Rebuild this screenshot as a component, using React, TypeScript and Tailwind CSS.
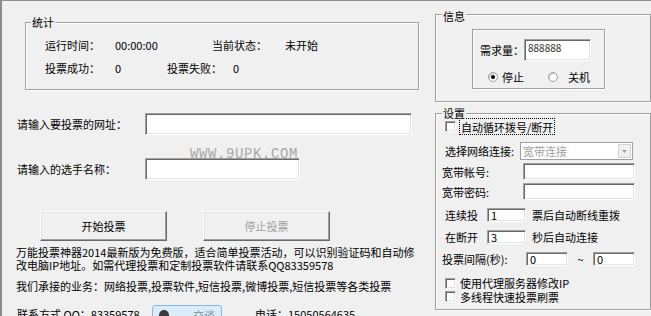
import React from "react";

const sunken =
  "bg-white border border-t-[#a0a0a0] border-l-[#a0a0a0] border-b-white border-r-white shadow-[inset_1px_1px_0_#696969,inset_-1px_-1px_0_#e3e3e3]";
const etched = "border border-[#a0a0a0] shadow-[inset_1px_1px_0_#ffffff,1px_1px_0_#ffffff]";
const raised =
  "border border-t-white border-l-white border-b-[#696969] border-r-[#696969] shadow-[inset_-1px_-1px_0_#a0a0a0,inset_1px_1px_0_#e3e3e3]";

function Check() {
  return <div className={`w-[11px] h-[11px] shrink-0 ${sunken}`} />;
}

function Radio({ on }: { on?: boolean }) {
  return (
    <div className="w-[10px] h-[10px] shrink-0 rounded-full border border-[#a0a0a0] bg-white flex items-center justify-center shadow-[inset_1px_1px_0_#c8c8c8]">
      {on ? <div className="w-[4px] h-[4px] rounded-full bg-black" /> : null}
    </div>
  );
}

export default function App() {
  return (
    <div className="w-[651px] h-[316px] overflow-hidden bg-[#f0f0f0] border-t border-t-[#8c8c8c] border-l-2 border-l-[#8c8c8c] flex text-[11px] leading-[14px] text-black font-['Noto_Sans_CJK_SC',sans-serif]">
      {/* LEFT */}
      <div className="w-[433px] shrink-0 flex flex-col relative">
        <div className={`relative ml-[23px] mt-[21px] w-[394px] h-[68px] shrink-0 ${etched} pt-[15px] pl-[19px]`}>
          <span className="absolute left-[5px] top-[-8px] px-[1px] bg-[#f0f0f0]">统计</span>
          <div className="flex h-[14px] whitespace-nowrap">
            <span className="w-[70px]">运行时间：</span>
            <span className="w-[97px]">00:00:00</span>
            <span className="w-[73px]">当前状态：</span>
            <span>未开始</span>
          </div>
          <div className="flex h-[14px] mt-[9px] whitespace-nowrap">
            <span className="w-[70px]">投票成功：</span>
            <span className="w-[52px]">0</span>
            <span className="w-[66px]">投票失败：</span>
            <span>0</span>
          </div>
        </div>

        <div className="flex items-center h-[22px] mt-[23px] pl-[15px] whitespace-nowrap">
          <span className="w-[128px]">请输入要投票的网址：</span>
          <div className={`w-[267px] h-[22px] ${sunken}`} />
        </div>
        <div className="flex items-center h-[22px] mt-[23px] pl-[15px] whitespace-nowrap">
          <span className="w-[128px]">请输入的选手名称：</span>
          <div className={`w-[155px] h-[22px] ${sunken}`} />
        </div>

        <div className="absolute left-[188px] top-[146px] text-[14px] leading-[14px] tracking-[0.6px] text-[#a8a8a8] font-['Liberation_Mono',monospace]">
          WWW.9UPK.COM
        </div>

        <div className="flex mt-[31px] pl-[38px] gap-[36px]">
          <div className={`w-[127px] h-[30px] bg-[#f0f0f0] ${raised} flex items-center justify-center`}>开始投票</div>
          <div className={`w-[127px] h-[30px] bg-[#f0f0f0] ${raised} flex items-center justify-center text-[#a0a0a0]`}>停止投票</div>
        </div>

        <div className="mt-[5px] pl-[14px] leading-[12.5px] whitespace-nowrap">
          万能投票神器2014最新版为免费版，适合简单投票活动，可以识别验证码和自动修
          <br />
          改电脑IP地址。如需代理投票和定制投票软件请联系QQ83359578
        </div>
        <div className="mt-[8px] pl-[14px] whitespace-nowrap">
          我们承接的业务：网络投票,投票软件,短信投票,微博投票,短信投票等各类投票
        </div>
        <div className="mt-[12px] pl-[15px] flex items-start whitespace-nowrap">
          <span className="w-[135px] pt-[2px]">联系方式 QQ：83359578</span>
          <div className="w-[70px] h-[20px] rounded-[3px] border border-[#84b7e3] bg-[#dcecfb] flex items-center pl-[6px] gap-[24px]">
            <div className="w-[10px] h-[10px] rounded-full bg-[#3a3a3a]" />
            <span className="text-[#7a8a9a]">交谈</span>
          </div>
          <span className="ml-[33px] pt-[2px]">电话：15050564635</span>
        </div>
      </div>

      {/* RIGHT */}
      <div className="w-[216px] shrink-0 flex flex-col">
        <div className={`relative mt-[13px] h-[88px] shrink-0 ${etched} pt-[14px] pl-[36px]`}>
          <span className="absolute left-[6px] top-[-6px] px-[1px] bg-[#f0f0f0]">信息</span>
          <div className={`w-[133px] h-[60px] ${etched} pt-[9px] pl-[7px]`}>
            <div className="flex items-center h-[22px] whitespace-nowrap">
              <span className="w-[44px]">需求量：</span>
              <div className={`w-[67px] h-[22px] ${sunken} text-[10px] leading-[10px] pt-[3px] pl-[3px] text-[#333]`}>888888</div>
            </div>
            <div className="flex items-center h-[14px] mt-[9px] whitespace-nowrap">
              <div className="ml-[8px]"><Radio on /></div>
              <span className="ml-[4px]">停止</span>
              <div className="ml-[24px]"><Radio /></div>
              <span className="ml-[10px]">关机</span>
            </div>
          </div>
        </div>

        <div className={`relative mt-[11px] h-[197px] shrink-0 ${etched} flex flex-col`}>
          <span className="absolute left-[6px] top-[-8px] px-[1px] bg-[#f0f0f0]">设置</span>

          <div className="flex items-center h-[17px] mt-[4px] pl-[9px] whitespace-nowrap">
            <Check />
            <span className="ml-[3px] h-[17px] border border-dotted border-black px-[1px] flex items-center">自动循环拨号/断开</span>
          </div>

          <div className="flex items-center h-[18px] mt-[7px] pl-[9px] whitespace-nowrap">
            <span className="w-[75px]">选择网络连接:</span>
            <div className="w-[113px] h-[18px] border border-[#a0a0a0] bg-white flex items-center justify-between pl-[2px] pr-[1px]">
              <span className="text-[#a0a0a0]">宽带连接</span>
              <div className="w-[13px] h-[14px] bg-[#f0f0f0] border border-[#d4d4d4] flex items-center justify-center">
                <svg width="5" height="3" viewBox="0 0 5 3"><path d="M0 0h5L2.5 3z" fill="#a0a0a0" /></svg>
              </div>
            </div>
          </div>

          <div className="flex items-center h-[17px] mt-[3px] pl-[6px] whitespace-nowrap">
            <span className="w-[81px]">宽带帐号:</span>
            <div className={`w-[112px] h-[17px] ${sunken}`} />
          </div>
          <div className="flex items-center h-[17px] mt-[3px] pl-[6px] whitespace-nowrap">
            <span className="w-[81px]">宽带密码:</span>
            <div className={`w-[112px] h-[17px] ${sunken}`} />
          </div>

          <div className="flex items-center h-[14px] mt-[8px] pl-[9px] whitespace-nowrap">
            <span className="w-[42px]">连续投</span>
            <div className={`w-[39px] h-[14px] ${sunken} leading-[12px] pl-[3px]`}>1</div>
            <span className="ml-[6px]">票后自动断线重拨</span>
          </div>
          <div className="flex items-center h-[14px] mt-[8px] pl-[9px] whitespace-nowrap">
            <span className="w-[42px]">在断开</span>
            <div className={`w-[39px] h-[14px] ${sunken} leading-[12px] pl-[3px]`}>3</div>
            <span className="ml-[6px]">秒后自动连接</span>
          </div>
          <div className="flex items-center h-[14px] mt-[8px] pl-[6px] whitespace-nowrap">
            <span className="w-[84px]">投票间隔(秒):</span>
            <div className={`w-[42px] h-[14px] ${sunken} leading-[12px] pl-[3px]`}>0</div>
            <span className="w-[25px] text-center">~</span>
            <div className={`w-[42px] h-[14px] ${sunken} leading-[12px] pl-[3px]`}>0</div>
          </div>

          <div className="flex items-center h-[14px] mt-[10px] pl-[9px] whitespace-nowrap">
            <Check />
            <span className="ml-[4px]">使用代理服务器修改IP</span>
          </div>
          <div className="flex items-center h-[13px] pl-[9px] whitespace-nowrap">
            <Check />
            <span className="ml-[4px]">多线程快速投票刷票</span>
          </div>
        </div>
      </div>
    </div>
  );
}
